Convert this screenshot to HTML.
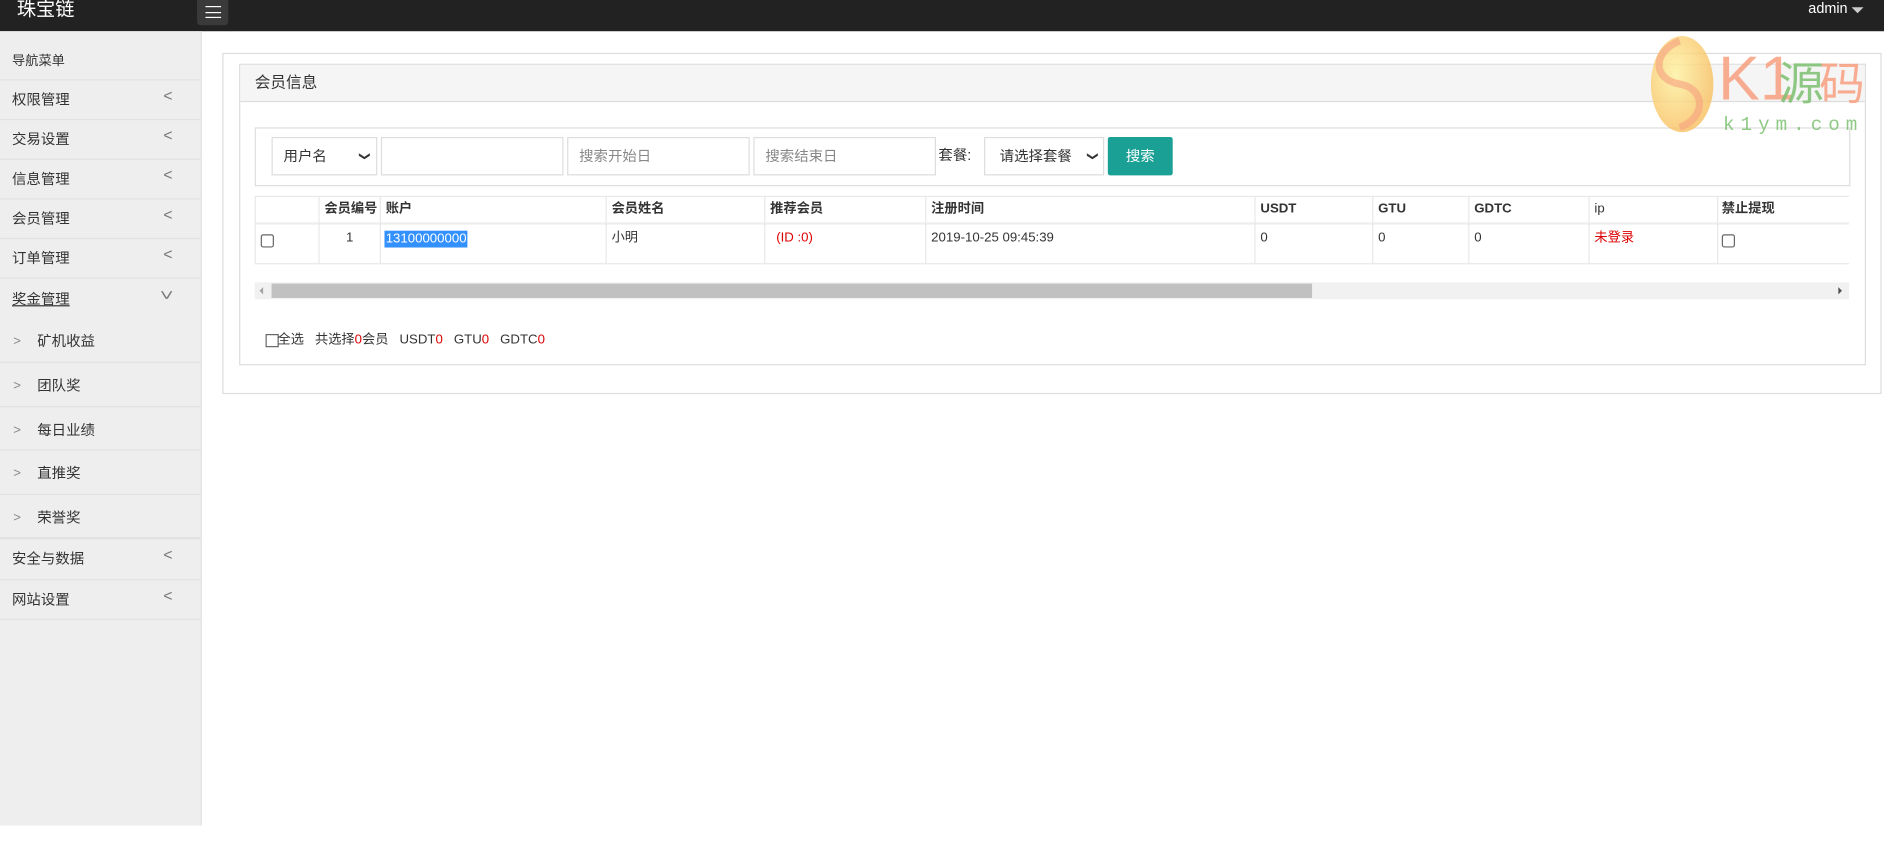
<!DOCTYPE html>
<html><head><meta charset="utf-8">
<style>
html,body{margin:0;padding:0;width:1884px;height:845px;overflow:hidden;background:#fff}
#w{position:absolute;left:0;top:0;width:1568px;height:704px;transform:scale(1.20153);transform-origin:0 0;font-family:"Liberation Sans","Noto Sans CJK SC",sans-serif;font-size:12px;color:#333;line-height:1.15}
.a{position:absolute}
.hd{left:0;top:0;width:1568px;height:26px;background:#222}
.side{left:0;top:26px;width:167px;height:661px;background:#eee;border-right:1px solid #e2e2e2}
.mi{position:absolute;left:0;width:167px;border-bottom:1px solid #e2e2e2;font-size:12px;color:#333}
.mi span{position:absolute;left:10px}
.arr{position:absolute;left:136px;color:#777;font-size:13px}
.sub span{left:31px}
.sub .s{position:absolute;left:11px;color:#888;font-size:11px}
.box{border:1px solid #ddd;background:#fff;box-sizing:border-box}
.inp{position:absolute;border:1px solid #ddd;box-sizing:border-box;height:32px;background:#fff;color:#888;font-size:12px;line-height:30px;padding-left:9px}
.th,.td{position:absolute;font-size:11px;color:#333}
.th{font-weight:bold;top:168px}
.td{top:192px}
.vl{position:absolute;width:1px;background:#e8e8e8}
.cb{position:absolute;width:9px;height:9px;border:1px solid #666;border-radius:2px;background:#fff}
</style></head><body><div id="w">
<div class="a hd"></div>
<div class="a" style="left:14px;top:0px;color:#fff;font-size:16px">珠宝链</div>
<div class="a" style="left:164px;top:0;width:26px;height:21px;background:#3a3a3a;border-radius:0 0 3px 3px"></div>
<div class="a" style="left:171px;top:5px;width:13px;height:10px;border-top:1.5px solid #fff;border-bottom:1.5px solid #fff;box-sizing:border-box"></div>
<div class="a" style="left:171px;top:9.5px;width:13px;height:1.5px;background:#fff"></div>
<div class="a" style="left:1505px;top:1px;color:#fff;font-size:12px">admin</div>
<div class="a" style="left:1541px;top:6px;width:0;height:0;border-left:5px solid transparent;border-right:5px solid transparent;border-top:5px solid #ccc"></div>

<div class="a side"></div>
<div class="a" style="left:10px;top:45px;font-size:11px">导航菜单</div>
<div class="mi" style="top:66px;height:0;border-bottom:1px solid #e2e2e2"></div>
<div class="mi" style="top:67px;height:32px"><span style="top:10px">权限管理</span><i class="arr" style="top:6px;font-style:normal">&lt;</i></div>
<div class="mi" style="top:100px;height:32px"><span style="top:10px">交易设置</span><i class="arr" style="top:6px;font-style:normal">&lt;</i></div>
<div class="mi" style="top:133px;height:32px"><span style="top:10px">信息管理</span><i class="arr" style="top:6px;font-style:normal">&lt;</i></div>
<div class="mi" style="top:166px;height:32px"><span style="top:10px">会员管理</span><i class="arr" style="top:6px;font-style:normal">&lt;</i></div>
<div class="mi" style="top:199px;height:32px"><span style="top:10px">订单管理</span><i class="arr" style="top:6px;font-style:normal">&lt;</i></div>
<div class="mi" style="top:232px;height:34px;border:0"><span style="top:11px;text-decoration:underline">奖金管理</span><i class="arr" style="top:6px;font-style:normal;transform:rotate(-90deg) scaleY(1.4)">&lt;</i></div>
<div class="mi sub" style="top:266px;height:35px"><i class="s" style="top:12px;font-style:normal">&gt;</i><span style="top:12px">矿机收益</span></div>
<div class="mi sub" style="top:302px;height:36px"><i class="s" style="top:13px;font-style:normal">&gt;</i><span style="top:13px">团队奖</span></div>
<div class="mi sub" style="top:339px;height:35px"><i class="s" style="top:13px;font-style:normal">&gt;</i><span style="top:13px">每日业绩</span></div>
<div class="mi sub" style="top:375px;height:36px"><i class="s" style="top:13px;font-style:normal">&gt;</i><span style="top:13px">直推奖</span></div>
<div class="mi sub" style="top:412px;height:35px;border-bottom:2px solid #e2e2e2"><i class="s" style="top:13px;font-style:normal">&gt;</i><span style="top:13px">荣誉奖</span></div>
<div class="mi" style="top:449px;height:33px"><span style="top:10px">安全与数据</span><i class="arr" style="top:6px;font-style:normal">&lt;</i></div>
<div class="mi" style="top:483px;height:32px"><span style="top:10px">网站设置</span><i class="arr" style="top:6px;font-style:normal">&lt;</i></div>

<div class="a box" style="left:185px;top:44px;width:1381px;height:284px"></div>
<div class="a box" style="left:199px;top:53px;width:1354px;height:251px"></div>
<div class="a" style="left:200px;top:54px;width:1352px;height:30px;background:#f5f5f5;border-bottom:1px solid #ddd"></div>
<div class="a" style="left:212px;top:62px;font-size:13px">会员信息</div>

<div class="a box" style="left:212px;top:106px;width:1328px;height:49px"></div>
<div class="inp" style="left:226px;top:114px;width:88px;color:#333">用户名<span style="position:absolute;left:73px;top:0;font-size:9px;transform:rotate(90deg)">&#10095;</span></div>
<div class="inp" style="left:317px;top:114px;width:152px"></div>
<div class="inp" style="left:472px;top:114px;width:152px">搜索开始日</div>
<div class="inp" style="left:627px;top:114px;width:152px">搜索结束日</div>
<div class="a" style="left:781px;top:123px;font-size:12px">套餐:</div>
<div class="inp" style="left:819px;top:114px;width:100px;color:#333;padding-left:12px">请选择套餐<span style="position:absolute;left:86px;top:0;font-size:9px;transform:rotate(90deg)">&#10095;</span></div>
<div class="a" style="left:922px;top:114px;width:54px;height:32px;background:#1aa094;color:#fff;text-align:center;line-height:32px;font-size:12px;border-radius:2px">搜索</div>

<div class="a" style="left:212px;top:163px;width:1327px;height:57px;border-top:1px solid #e8e8e8;border-bottom:1px solid #e8e8e8;box-sizing:border-box"></div>
<div class="a" style="left:212px;top:185px;width:1327px;height:2px;background:#eee"></div>
<div class="vl" style="left:212px;top:163px;height:57px"></div>
<div class="vl" style="left:265px;top:163px;height:57px"></div>
<div class="vl" style="left:316px;top:163px;height:57px"></div>
<div class="vl" style="left:504px;top:163px;height:57px"></div>
<div class="vl" style="left:636px;top:163px;height:57px"></div>
<div class="vl" style="left:770px;top:163px;height:57px"></div>
<div class="vl" style="left:1044px;top:163px;height:57px"></div>
<div class="vl" style="left:1142px;top:163px;height:57px"></div>
<div class="vl" style="left:1222px;top:163px;height:57px"></div>
<div class="vl" style="left:1322px;top:163px;height:57px"></div>
<div class="vl" style="left:1429px;top:163px;height:57px"></div>
<div class="th" style="left:270px">会员编号</div>
<div class="th" style="left:321px">账户</div>
<div class="th" style="left:509px">会员姓名</div>
<div class="th" style="left:641px">推荐会员</div>
<div class="th" style="left:775px">注册时间</div>
<div class="th" style="left:1049px">USDT</div>
<div class="th" style="left:1147px">GTU</div>
<div class="th" style="left:1227px">GDTC</div>
<div class="th" style="left:1327px;font-weight:normal">ip</div>
<div class="th" style="left:1433px">禁止提现</div>
<div class="cb" style="left:217px;top:195px"></div>
<div class="td" style="left:288px">1</div>
<div class="td" style="left:320px;background:#3390ff;color:#fff;padding:0 1px;line-height:14px;top:192px">13100000000</div>
<div class="td" style="left:509px">小明</div>
<div class="td" style="left:646px;color:#d00">(ID :0)</div>
<div class="td" style="left:775px">2019-10-25 09:45:39</div>
<div class="td" style="left:1049px">0</div>
<div class="td" style="left:1147px">0</div>
<div class="td" style="left:1227px">0</div>
<div class="td" style="left:1327px;color:#d00">未登录</div>
<div class="cb" style="left:1433px;top:195px"></div>

<div class="a" style="left:212px;top:235px;width:1327px;height:14px;background:#f1f1f1"></div>
<div class="a" style="left:226px;top:236px;width:866px;height:12px;background:#c1c1c1"></div>
<div class="a" style="left:216px;top:239px;border-top:3px solid transparent;border-bottom:3px solid transparent;border-right:3px solid #a3a3a3"></div>
<div class="a" style="left:1530px;top:239px;border-top:3px solid transparent;border-bottom:3px solid transparent;border-left:3px solid #505050"></div>

<div class="cb" style="left:221px;top:278px;border-radius:0"></div>
<div class="a" style="left:231px;top:277px;font-size:11px">全选 &nbsp;&nbsp;共选择<span style="color:#d00">0</span>会员 &nbsp;&nbsp;USDT<span style="color:#d00">0</span> &nbsp;&nbsp;GTU<span style="color:#d00">0</span> &nbsp;&nbsp;GDTC<span style="color:#d00">0</span></div>

<svg class="a" style="left:1370px;top:28px" width="190" height="85" viewBox="0 0 190 85">
<defs><radialGradient id="g" cx="40%" cy="40%" r="60%"><stop offset="0" stop-color="#fff3a0"/><stop offset="1" stop-color="#f8c060"/></radialGradient></defs>
<ellipse cx="30" cy="42" rx="26" ry="40" fill="url(#g)" opacity=".8"/>
<path d="M28 6 C5 15 5 38 28 42 C50 46 50 70 28 78" stroke="#f7a080" stroke-width="6" fill="none" opacity=".6"/>
<text x="60" y="55" font-family="Liberation Sans,sans-serif" font-size="52" fill="#f8a080" opacity=".85">K1</text>
<text x="110" y="55" font-family="Noto Sans CJK SC,sans-serif" font-size="38" fill="#7cc070" opacity=".85">源</text>
<text x="144" y="55" font-family="Noto Sans CJK SC,sans-serif" font-size="38" fill="#f8a080" opacity=".85">码</text>
<text x="64" y="80" font-family="Liberation Mono,monospace" font-size="16" fill="#7cc070" letter-spacing="5" opacity=".85">k1ym.com</text>
</svg>
</div></body></html>
